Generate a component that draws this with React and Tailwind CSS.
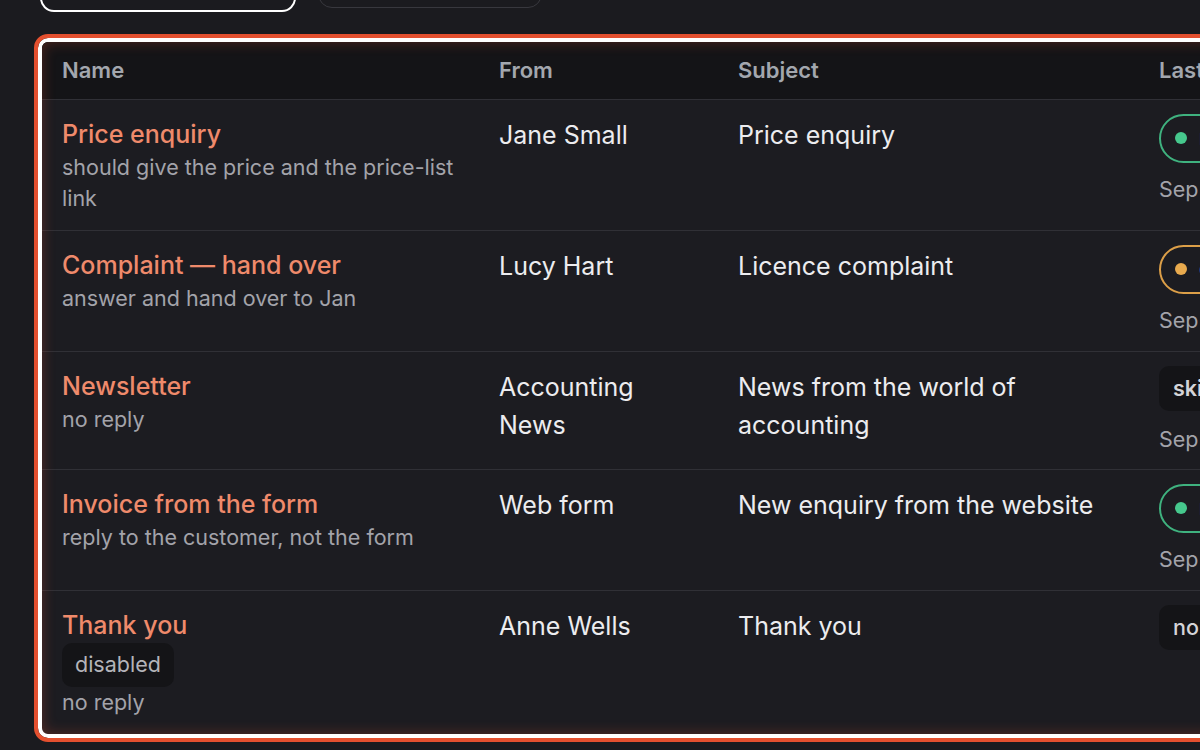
import React from "react";

const rows = [
  {
    name: "Price enquiry",
    sub: ["should give the price and the price-list link"],
    from: "Jane Small",
    subject: "Price enquiry",
    status: { kind: "green", label: "replied" },
    date: "Sep 12, 09:41",
  },
  {
    name: "Complaint — hand over",
    sub: ["answer and hand over to Jan"],
    from: "Lucy Hart",
    subject: "Licence complaint",
    status: { kind: "orange", label: "drafted" },
    date: "Sep 12, 08:15",
  },
  {
    name: "Newsletter",
    sub: ["no reply"],
    from: "Accounting News",
    subject: "News from the world of accounting",
    status: { kind: "chip", label: "skipped" },
    date: "Sep 11, 17:02",
  },
  {
    name: "Invoice from the form",
    sub: ["reply to the customer, not the form"],
    from: "Web form",
    subject: "New enquiry from the website",
    status: { kind: "green", label: "replied" },
    date: "Sep 11, 14:30",
  },
  {
    name: "Thank you",
    disabled: true,
    sub: ["no reply"],
    from: "Anne Wells",
    subject: "Thank you",
    status: { kind: "chip2", label: "no runs" },
    date: null,
  },
];

function Status({ s }) {
  if (s.kind === "green" || s.kind === "orange") {
    const green = s.kind === "green";
    return (
      <span
        className={
          "inline-flex items-center h-[49px] rounded-full border-2 pl-[14px] pr-[18px] gap-[12px] text-[21px] font-medium text-[#d7ddf3] whitespace-nowrap " +
          (green ? "border-[#3fb27f]" : "border-[#dc9f48]")
        }
      >
        <span
          className={
            "w-[12px] h-[12px] rounded-full " +
            (green ? "bg-[#46c88d]" : "bg-[#e8aa4e]")
          }
        />
        {s.label}
      </span>
    );
  }
  return (
    <span
      className={
        "inline-flex items-center h-[45px] rounded-[10px] bg-[#141417] px-[14px] text-[21.5px] text-[#d4d4d8] whitespace-nowrap " +
        (s.kind === "chip" ? "font-semibold" : "font-medium")
      }
    >
      {s.label}
    </span>
  );
}

export default function App() {
  return (
    <div className="w-[1200px] h-[750px] overflow-hidden bg-[#1b1b1f] font-['Inter',sans-serif] antialiased">
      <div className="flex items-start -mt-[38px] pl-[40px]">
        <div className="h-[50px] w-[256px] rounded-[14px] border-2 border-white" />
        <div className="ml-[22px] h-[46px] w-[224px] rounded-[14px] border-[1.5px] border-[#38383e]" />
      </div>

      <div className="relative mt-[26px] ml-[38px] w-[1400px] rounded-[10px] border-4 border-white outline-4 outline-[#e4502f] overflow-hidden bg-[#1c1c21]">
        <table className="w-full table-fixed border-collapse text-left">
          <colgroup>
            <col className="w-[437px]" />
            <col className="w-[239px]" />
            <col className="w-[421px]" />
            <col />
          </colgroup>
          <thead>
            <tr className="bg-[#141417] border-b border-[#303036]">
              {["Name", "From", "Subject", "Last run"].map((h) => (
                <th
                  key={h}
                  className="h-[57px] px-[20px] align-middle text-[22px] font-semibold text-[#a3a7ae]"
                >
                  {h}
                </th>
              ))}
            </tr>
          </thead>
          <tbody>
            {rows.map((r, i) => {
              const isChip = r.status.kind === "chip" || r.status.kind === "chip2";
              return (
                <tr key={i} className={i > 0 ? "border-t border-[#303036]" : ""}>
                  <td className="align-top px-[20px] pt-[16px] pb-[16px]">
                    <div className="text-[25px] leading-[36px] font-medium text-[#ef8a6b]">
                      {r.name}
                    </div>
                    {r.disabled && (
                      <span className="inline-flex items-center h-[44px] rounded-[10px] bg-[#141417] px-[13px] text-[21.5px] text-[#b4b4ba]">
                        disabled
                      </span>
                    )}
                    {r.sub.map((t, j) => (
                      <div key={j} className="text-[21.5px] leading-[31px] text-[#a3a3aa]">
                        {t}
                      </div>
                    ))}
                  </td>
                  <td className="align-top px-[20px] pt-[16px] pb-[16px] text-[25px] leading-[38px] text-[#ececef]">
                    {r.from}
                  </td>
                  <td className="align-top px-[20px] pt-[16px] pb-[16px] text-[25px] leading-[38px] text-[#ececef]">
                    {r.subject}
                  </td>
                  <td
                    className={
                      "align-top px-[20px] pt-[14px] " +
                      (isChip ? "pb-[14px]" : "pb-[15px]")
                    }
                  >
                    <div
                      className={
                        "flex items-start " + (isChip ? "h-[58px]" : "h-[60px]")
                      }
                    >
                      <Status s={r.status} />
                    </div>
                    {r.date && (
                      <div className="text-[21.5px] leading-[31px] text-[#a3a3aa] whitespace-nowrap">
                        {r.date}
                      </div>
                    )}
                  </td>
                </tr>
              );
            })}
          </tbody>
        </table>
        <div className="pointer-events-none absolute inset-0 rounded-[6px] shadow-[inset_0_0_14px_rgba(228,80,47,0.3)]" />
      </div>
    </div>
  );
}
